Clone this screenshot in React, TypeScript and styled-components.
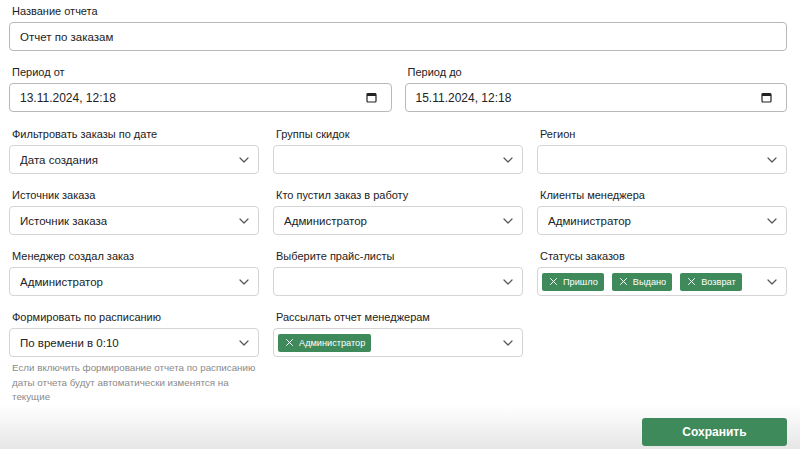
import styled, { createGlobalStyle } from 'styled-components';

const GlobalStyle = createGlobalStyle`
	html, body {
		margin: 0;
		padding: 0;
		background: #ffffff;
		font-family: 'Liberation Sans', Arial, sans-serif;
		color: #222;
	}
	* {
		box-sizing: border-box;
	}
`;

const ChevronIcon = () => (
	<svg width='10' height='6' viewBox='0 0 10 6' fill='none'>
		<path d='M1 1l4 4 4-4' stroke='#555' strokeWidth='1.2' strokeLinecap='round' strokeLinejoin='round' />
	</svg>
);

const CalendarIcon = () => (
	<svg width='11' height='11' viewBox='0 0 11 11' fill='none'>
		<rect x='1' y='1.5' width='9' height='8.5' rx='1' stroke='#222' strokeWidth='1.2' />
		<rect x='1' y='1.5' width='9' height='2.5' fill='#222' />
	</svg>
);

const CrossIcon = () => (
	<svg width='7' height='7' viewBox='0 0 7 7' fill='none'>
		<path d='M0.5 0.5l6 6M6.5 0.5l-6 6' stroke='#fff' strokeWidth='1' strokeLinecap='round' />
	</svg>
);

type TagProps = { label: string };

const Tag = ({ label }: TagProps) => (
	<TagBox>
		<CrossIcon />
		{label}
	</TagBox>
);

type SelectProps = { value?: string; tags?: string[] };

const Select = ({ value, tags }: SelectProps) => (
	<SelectBox $hasTags={!!tags}>
		<SelectValue>
			{tags ? tags.map(t => <Tag key={t} label={t} />) : value}
		</SelectValue>
		<ChevronIcon />
	</SelectBox>
);

const App = () => {
	return (
		<>
			<GlobalStyle />
			<Page>
				<Form>
					<Field>
						<Label>Название отчета</Label>
						<TextInput>Отчет по заказам</TextInput>
					</Field>

					<TwoCols>
						<Field>
							<Label>Период от</Label>
							<DateInput>
								<span>13.11.2024, 12:18</span>
								<CalendarIcon />
							</DateInput>
						</Field>
						<Field>
							<Label>Период до</Label>
							<DateInput>
								<span>15.11.2024, 12:18</span>
								<CalendarIcon />
							</DateInput>
						</Field>
					</TwoCols>

					<ThreeCols>
						<Field>
							<Label>Фильтровать заказы по дате</Label>
							<Select value='Дата создания' />
						</Field>
						<Field>
							<Label>Группы скидок</Label>
							<Select />
						</Field>
						<Field>
							<Label>Регион</Label>
							<Select />
						</Field>

						<Field>
							<Label>Источник заказа</Label>
							<Select value='Источник заказа' />
						</Field>
						<Field>
							<Label>Кто пустил заказ в работу</Label>
							<Select value='Администратор' />
						</Field>
						<Field>
							<Label>Клиенты менеджера</Label>
							<Select value='Администратор' />
						</Field>

						<Field>
							<Label>Менеджер создал заказ</Label>
							<Select value='Администратор' />
						</Field>
						<Field>
							<Label>Выберите прайс-листы</Label>
							<Select />
						</Field>
						<Field>
							<Label>Статусы заказов</Label>
							<Select tags={['Пришло', 'Выдано', 'Возврат']} />
						</Field>

						<Field>
							<Label>Формировать по расписанию</Label>
							<Select value='По времени в 0:10' />
							<Hint>
								Если включить формирование отчета по расписанию даты отчета будут
								автоматически изменятся на текущие
							</Hint>
						</Field>
						<Field>
							<Label>Рассылать отчет менеджерам</Label>
							<Select tags={['Администратор']} />
						</Field>
					</ThreeCols>
				</Form>

				<Footer>
					<SaveButton>Сохранить</SaveButton>
				</Footer>
			</Page>
		</>
	);
};

// Styled Components
const Page = styled.div`
	width: 800px;
	height: 449px;
	overflow: hidden;
	display: flex;
	flex-direction: column;
`;

const Form = styled.div`
	display: flex;
	flex-direction: column;
	gap: 14px;
	padding: 4px 13px 0 9px;
`;

const Field = styled.div`
	display: flex;
	flex-direction: column;
	min-width: 0;
`;

const Label = styled.div`
	font-size: 11px;
	line-height: 14px;
	color: #222;
	padding-left: 3px;
	margin-bottom: 4px;
`;

const inputBase = `
	height: 29px;
	border: 1px solid #c9c9c9;
	border-radius: 4px;
	background: #fff;
	font-size: 11.5px;
	color: #222;
	display: flex;
	align-items: center;
`;

const TextInput = styled.div`
	${inputBase}
	padding: 0 10px;
	border-color: #b8b8b8;
`;

const DateInput = styled.div`
	${inputBase}
	font-size: 12px;
	justify-content: space-between;
	padding: 0 14px 0 10px;
	border-color: #b8b8b8;
`;

const TwoCols = styled.div`
	display: grid;
	grid-template-columns: 1fr 1fr;
	column-gap: 13px;
`;

const ThreeCols = styled.div`
	display: grid;
	grid-template-columns: repeat(3, 1fr);
	column-gap: 14px;
	row-gap: 14px;
	margin-top: 1px;
`;

const SelectBox = styled.div<{ $hasTags?: boolean }>`
	${inputBase}
	border-color: #d4d4d4;
	justify-content: space-between;
	padding: ${props => (props.$hasTags ? '0 9px 0 4px' : '0 9px 0 10px')};

	svg {
		flex-shrink: 0;
	}
`;

const SelectValue = styled.div`
	display: flex;
	align-items: center;
	gap: 8px;
	white-space: nowrap;
	overflow: hidden;
`;

const TagBox = styled.div`
	display: flex;
	align-items: center;
	gap: 6px;
	height: 18px;
	padding: 0 6px 0 8px;
	background: #3f8a5b;
	border-radius: 2px;
	color: #fff;
	font-size: 9.2px;
`;

const Hint = styled.div`
	margin-top: 4px;
	padding-left: 3px;
	font-size: 9.8px;
	line-height: 14.5px;
	color: #8a8a8a;
`;

const Footer = styled.div`
	margin-top: auto;
	height: 44px;
	display: flex;
	justify-content: flex-end;
	align-items: flex-start;
	padding: 13px 13px 0 0;
	background: linear-gradient(to bottom, #ffffff 0%, #f4f4f4 45%, #e6e6e6 100%);
`;

const SaveButton = styled.button`
	width: 145px;
	height: 28px;
	border: none;
	border-radius: 3px;
	background: #3f8a5b;
	color: #fff;
	font-family: 'Liberation Sans', Arial, sans-serif;
	font-size: 12px;
	font-weight: bold;
	cursor: pointer;
`;

export default App;
